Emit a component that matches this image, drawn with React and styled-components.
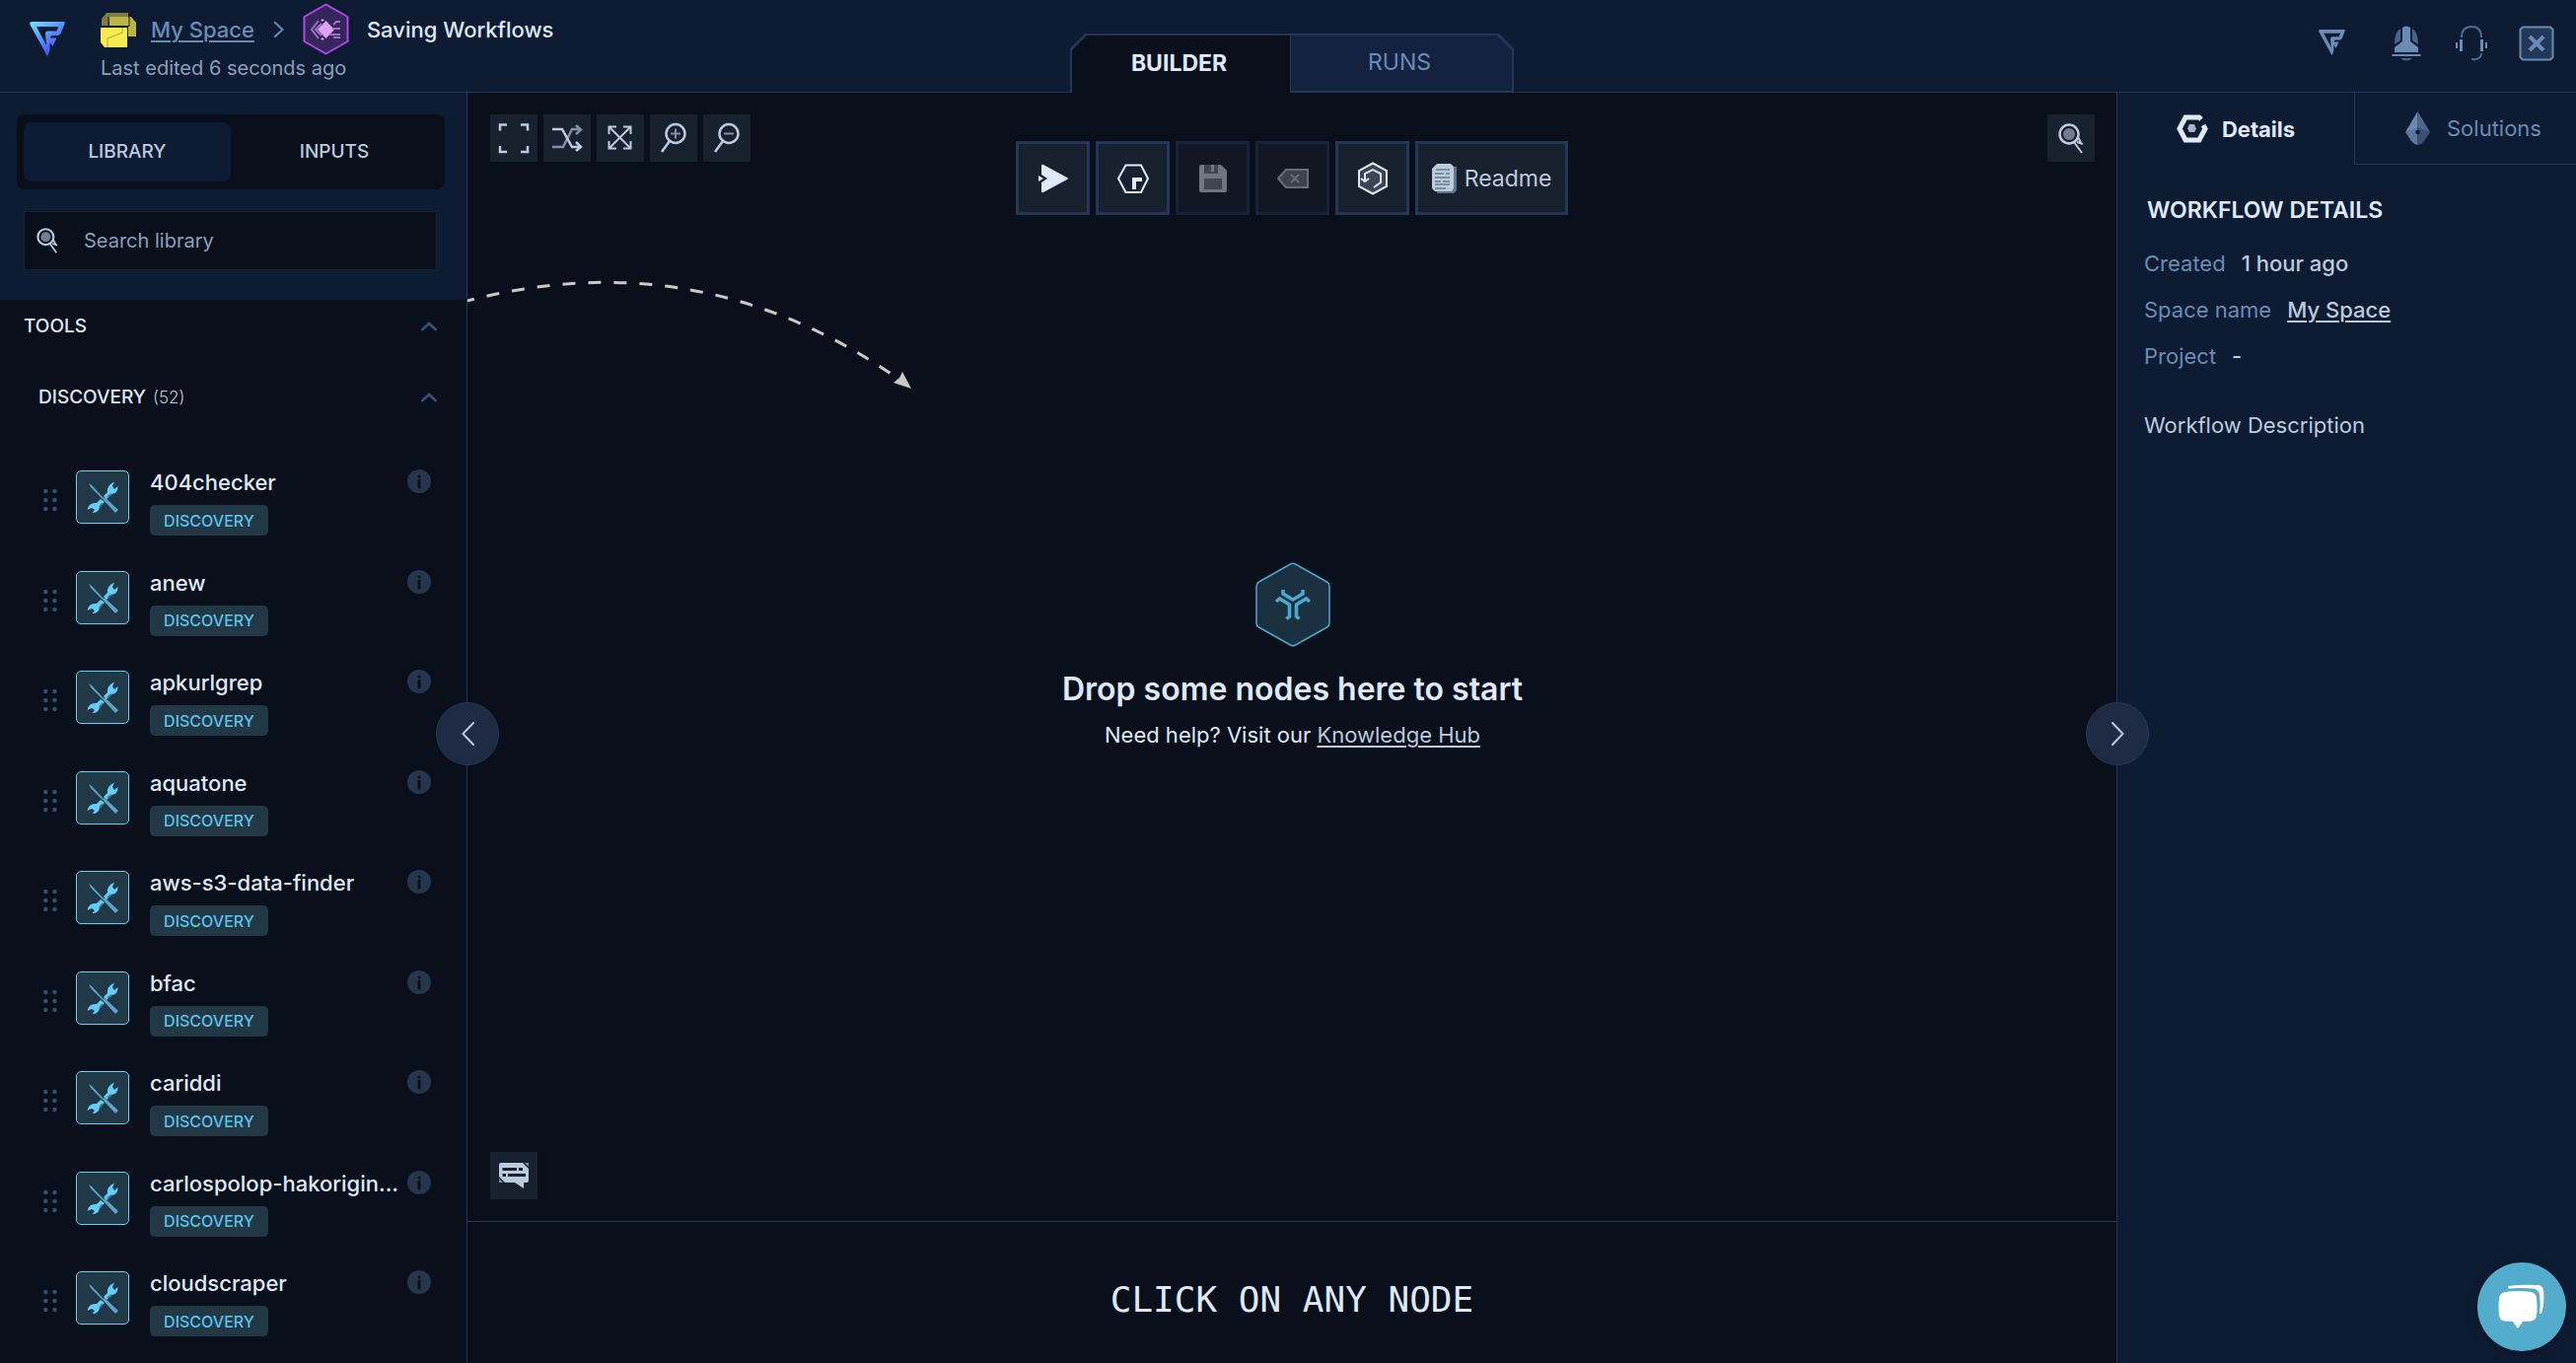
import React from "react";
import styled, { createGlobalStyle, css } from "styled-components";

const color = {
  ink: "#0a101b",
  navy: "#0e1c33",
  tab: "#132241",
  tile: "#18212e",
  line: "#243759",
  text: "#dfe9f9",
  soft: "#bccade",
  muted: "#6b8bb5",
  faint: "#8c9fbc",
  cyan: "#64cdf8",
};

const GlobalStyle = createGlobalStyle`
  *, *::before, *::after { box-sizing: border-box; }
  body {
    margin: 0;
    background: ${color.ink};
    color: ${color.text};
    font-family: Inter, "Liberation Sans", sans-serif;
    font-size: 22px;
    line-height: 26px;
  }
  h1, h2, h3, p, ul, dl, dd { margin: 0; padding: 0; }
  ul { list-style: none; }
  button { font: inherit; color: inherit; cursor: pointer; padding: 0; border: 0; background: none; }
  a { color: inherit; text-underline-offset: 3px; text-decoration-thickness: 2px; }
  svg { display: block; flex: none; }
`;

/* ---------- layout ---------- */

const Page = styled.div`
  height: 100vh;
  display: grid;
  grid-template-rows: 94px minmax(0, 1fr);
`;

const Header = styled.header`
  display: grid;
  grid-template-columns: 1fr auto 1fr;
  background: ${color.navy};
  border-bottom: 1px solid ${color.line};
`;

const Main = styled.main`
  position: relative;
  display: grid;
  grid-template-columns: 474px minmax(0, 1fr) 466px;
  min-height: 0;
`;

/* ---------- header ---------- */

const Brand = styled.div`
  display: flex;
  align-items: flex-start;
  gap: 36px;
  padding-left: 30px;
`;

const BrandLink = styled.a`
  margin-top: 22px;
`;

const TitleBlock = styled.div`
  display: flex;
  flex-direction: column;
  padding-top: 3px;
`;

const Crumbs = styled.nav`
  display: flex;
  align-items: center;
  height: 53px;
`;

const SpaceLink = styled.a`
  margin: 0 20px 0 15px;
  color: ${color.muted};
  font-weight: 500;
`;

const HexBadge = styled.span`
  margin: 0 18px 0 19px;
`;

const WorkflowTitle = styled.h1`
  font-size: 22px;
  font-weight: 500;
`;

const Edited = styled.p`
  color: ${color.faint};
  font-size: 20px;
`;

const ViewTabs = styled.nav`
  align-self: end;
  display: flex;
  height: 60px;
  margin: 0 0 -1px 8px;
`;

const cutLeft = "polygon(0 15px, 15px 0, 100% 0, 100% 100%, 0 100%)";
const cutRight = "polygon(0 0, calc(100% - 15px) 0, 100% 15px, 100% 100%, 0 100%)";

const ViewTab = styled.button`
  width: ${(p) => (p.$active ? 223 : 227)}px;
  padding: ${(p) => (p.$active ? "2px 0 0 2px" : "2px 2px 2px 1px")};
  background: ${color.line};
  clip-path: ${(p) => (p.$active ? cutLeft : cutRight)};

  span {
    display: grid;
    place-items: center;
    height: 100%;
    padding: ${(p) => (p.$active ? "0 4px 3px 0" : "0 4px 2px 0")};
    background: ${(p) => (p.$active ? color.ink : color.tab)};
    color: ${(p) => (p.$active ? color.text : color.muted)};
    clip-path: ${(p) => (p.$active ? cutLeft : cutRight)};
    font-size: 23px;
    font-weight: ${(p) => (p.$active ? 700 : 400)};
  }
`;

const HeaderActions = styled.div`
  justify-self: end;
  display: flex;
  align-items: center;
  gap: 30px;
  padding: 0 22px 6px 0;
`;

const IconButton = styled.button`
  min-width: ${(p) => (p.$wide ? 56 : 36)}px;
  display: grid;
  place-items: center;
`;

/* ---------- library sidebar ---------- */

const Sidebar = styled.aside`
  display: flex;
  flex-direction: column;
  min-height: 0;
  border-right: 1px solid ${color.line};
`;

const SidebarTop = styled.div`
  padding: 22px 22px 30px 17px;
  background: ${color.navy};
`;

const Switcher = styled.div`
  display: grid;
  grid-template-columns: 1fr 1fr;
  padding: 8px 7px;
  border-radius: 8px;
  background: ${color.ink};
`;

const SwitchButton = styled.button`
  height: 60px;
  border-radius: 8px;
  color: ${color.soft};
  font-size: 19px;
  font-weight: 500;
  ${(p) => p.$active && css`background: ${color.navy};`}
`;

const SearchBox = styled.label`
  display: flex;
  align-items: center;
  gap: 26px;
  height: 60px;
  margin: 22px 8px 0 7px;
  padding-left: 12px;
  border: 1px solid #18222f;
  background: ${color.ink};
`;

const SearchInput = styled.input`
  flex: 1;
  min-width: 0;
  height: 100%;
  padding: 0;
  border: 0;
  outline: 0;
  background: none;
  color: ${color.text};
  font: inherit;
  font-size: 20px;
  &::placeholder { color: ${color.faint}; opacity: 1; }
`;

const SectionToggle = styled.button`
  display: flex;
  align-items: center;
  gap: 7px;
  height: 52px;
  margin-top: ${(p) => (p.$nested ? 20 : 1)}px;
  padding: 0 30px 0 ${(p) => (p.$nested ? 39 : 24)}px;
  font-size: 19px;
  font-weight: 500;
  text-align: left;

  small {
    color: ${color.soft};
    font-size: 17px;
    font-weight: 300;
  }
  svg { margin-left: auto; }
`;

const ToolList = styled.ul`
  flex: 1;
  min-height: 0;
  display: flex;
  flex-direction: column;
  justify-content: space-between;
  gap: 20px;
  margin-top: 47px;
  padding-bottom: 27px;
  overflow: hidden;
`;

const ToolItem = styled.li`
  flex: none;
  display: grid;
  grid-template-columns: 14px 54px minmax(0, 1fr) 24px;
  align-items: start;
  padding: 0 36px 0 44px;
`;

const Grip = styled.span`
  padding-top: 19px;
`;

const ToolTile = styled.span`
  display: grid;
  place-items: center;
  width: 54px;
  height: 54px;
  margin: 1px 0 0 19px;
  border: 1px solid ${color.cyan};
  border-radius: 5px;
  background: #213846;
`;

const ToolText = styled.div`
  padding-left: 40px;
`;

const ToolName = styled.h3`
  font-size: 22px;
  font-weight: 500;
  line-height: 26px;
  white-space: nowrap;
`;

const Tag = styled.span`
  display: inline-grid;
  place-items: center;
  width: 120px;
  height: 31px;
  margin-top: 10px;
  border-radius: 5px;
  background: #223845;
  color: #5bc2ee;
  font-size: 16px;
  font-weight: 500;
  vertical-align: top;
`;

/* ---------- canvas ---------- */

const Center = styled.section`
  display: grid;
  grid-template-rows: minmax(0, 1fr) 143px;
  min-width: 0;
`;

const Canvas = styled.div`
  position: relative;
  display: flex;
  flex-direction: column;
  justify-content: space-between;
  padding: 22px 22px 22px 23px;
  border-bottom: 1px solid ${color.line};
`;

const ToolRow = styled.div`
  display: flex;
  gap: 6px;
`;

const SmallButton = styled.button`
  display: grid;
  place-items: center;
  width: 48px;
  height: 48px;
  margin-left: ${(p) => (p.$end ? "auto" : "0")};
  background: ${color.tile};
`;

const ActionBar = styled.div`
  position: absolute;
  top: 49px;
  left: 50%;
  transform: translateX(-50%);
  display: flex;
  gap: 6px;
`;

const ActionButton = styled.button`
  display: flex;
  align-items: center;
  justify-content: center;
  gap: 8px;
  width: ${(p) => (p.$wide ? 155 : 75)}px;
  height: 75px;
  border: 3px solid ${color.line};
  background: ${color.tile};
  color: ${color.soft};
  font-size: 23px;
  opacity: ${(p) => (p.disabled ? 0.5 : 1)};
`;

const HintArrow = styled.svg`
  position: absolute;
  top: 180px;
  left: 0;
`;

const EmptyState = styled.div`
  display: flex;
  flex-direction: column;
  align-items: center;
  padding-bottom: 4px;
  text-align: center;

  h2 {
    margin-top: 23px;
    font-size: 32px;
    font-weight: 600;
    line-height: 40px;
  }
  p { margin-top: 13px; }
  a { color: ${color.soft}; }
`;

const NodePanel = styled.div`
  display: grid;
  place-items: center;
  padding-top: 15px;
  font-family: "DejaVu Sans Mono", monospace;
  font-size: 36px;
  line-height: 42px;
`;

/* ---------- details ---------- */

const Details = styled.aside`
  border-left: 1px solid ${color.line};
  background: ${color.navy};
`;

const DetailTabs = styled.div`
  display: grid;
  grid-template-columns: 240px 1fr;
  height: 73px;
`;

const DetailTab = styled.button`
  display: flex;
  align-items: center;
  justify-content: center;
  gap: ${(p) => (p.$active ? 14 : 17)}px;
  color: ${(p) => (p.$active ? color.text : color.muted)};
  font-weight: ${(p) => (p.$active ? 700 : 400)};
  ${(p) =>
    !p.$active &&
    css`
      padding-left: 16px;
      border-left: 1px solid ${color.line};
      border-bottom: 1px solid ${color.line};
    `}
`;

const DetailBody = styled.div`
  padding: 33px 27px;

  h2 {
    padding-left: 3px;
    font-size: 23px;
    font-weight: 600;
  }
`;

const Facts = styled.dl`
  display: grid;
  gap: 21px;
  margin: 28px 0 44px;
`;

const Fact = styled.div`
  display: flex;
  gap: 16px;

  dt { color: ${color.muted}; }
  dd { color: ${color.soft}; font-weight: 500; }
`;

const Description = styled.p`
  color: ${color.soft};
`;

/* ---------- floating controls ---------- */

const PanelHandle = styled.button`
  position: absolute;
  top: 48%;
  ${(p) => (p.$side === "left" ? "left: 442px;" : "right: 433px;")}
  display: grid;
  place-items: center;
  width: 64px;
  height: 64px;
  border: 1px solid ${color.line};
  border-radius: 50%;
  background: #1e2b43;
  z-index: 2;
`;

const ChatButton = styled.button`
  position: absolute;
  right: 10px;
  bottom: 12px;
  display: grid;
  place-items: center;
  width: 90px;
  height: 90px;
  border-radius: 50%;
  background: #54accd;
  box-shadow: 0 2px 12px rgba(0, 0, 0, 0.3);
`;

/* ---------- icons ---------- */

const Logo = ({ size, gradient }) => (
  <svg width={size} height={size} viewBox="0 0 36 36" aria-hidden="true">
    <defs>
      <linearGradient id="brand" x1="0" y1="0" x2="0.7" y2="1">
        <stop offset="0" stopColor="#6fe6ff" />
        <stop offset="0.5" stopColor="#5791ff" />
        <stop offset="1" stopColor="#4a3df0" />
      </linearGradient>
    </defs>
    <path
      fill={gradient ? "url(#brand)" : color.muted}
      fillRule="evenodd"
      d="M2 0H34Q36.500 0 35.500 2.500L31.500 12Q30.800 14 28.500 14H22L21 16.500H27.500L23.500 25L20.500 21V29L18 35L0.500 3Q-0.500 0 2 0ZM7 5L17 24L16 12Q16 9.500 18.500 9.500H27.500L29.500 5Z"
    />
  </svg>
);

const FolderIcon = () => (
  <svg width="36" height="36" viewBox="0 0 36 36" aria-hidden="true">
    <path d="M6 1H28V5H9L8 14H1V7Z" fill="#807c3f" />
    <path d="M9 5H31L36 11V25H28V15H9Z" fill="#bbb544" />
    <path d="M8 5V14.500H29V5" fill="none" stroke={color.navy} strokeWidth="1" />
    <path d="M0 16H27V36H4L0 31Z" fill="#f6ec4c" />
    <path d="M22 16V21L7 27V36" fill="none" stroke="#b0a73b" strokeWidth="1" />
  </svg>
);

const PurpleHex = () => (
  <svg width="47" height="53" viewBox="0 0 47 53" aria-hidden="true">
    <path d="M23.500 1.500L45.500 14V39L23.500 51.500L1.500 39V14Z" fill="#35265c" stroke="#b347ea" strokeWidth="2" strokeLinejoin="round" />
    <path d="M23.500 18L32 27L23.500 36L15 27Z" fill="#dda3f8" />
    <g fill="none" stroke="#a06fc4" strokeWidth="2">
      <path d="M16 18L9 27L16 36M19 21L13 27L19 33" />
      <path d="M38 19H34L31 22M30 26H38M27 32H38M31 35H38" />
    </g>
    <path d="M20 16V19M18.500 17.500H21.500M20 35V38M18.500 36.500H21.500" stroke="#dda3f8" />
  </svg>
);

const Chevron = ({ dir, stroke, w = 10, h = 16, weight = 2 }) => (
  <svg width={w} height={h} viewBox={`0 0 ${w} ${h}`} aria-hidden="true">
    <path
      d={
        dir === "up"
          ? `M1.500 ${h - 2}L${w / 2} 2L${w - 1.5} ${h - 2}`
          : dir === "left"
          ? `M${w - 1} 1L1.500 ${h / 2}L${w - 1} ${h - 1}`
          : `M1 1L${w - 1.5} ${h / 2}L1 ${h - 1}`
      }
      fill="none"
      stroke={stroke}
      strokeWidth={weight}
      strokeLinecap="round"
    />
  </svg>
);

const HelmetIcon = () => (
  <svg width="30" height="36" viewBox="0 0 30 36" aria-hidden="true">
    <path d="M9 3Q3 7 3 19L9 15ZM21 3Q27 7 27 19L21 15Z" fill="#4c658a" />
    <path d="M11 2Q15 -1 19 2V16L27 22V27H3V22L11 16Z" fill={color.muted} />
    <path d="M0.500 30H29.500" stroke={color.muted} strokeWidth="2" />
    <path d="M9 33H21Q15 38 9 33Z" fill="#4c658a" />
  </svg>
);

const HeadsetIcon = () => (
  <svg width="32" height="36" viewBox="0 0 32 36" aria-hidden="true">
    <path d="M6 12Q6 1 16 1Q26 1 26 12" fill="none" stroke="#4f698f" strokeWidth="2" />
    <path d="M4 14H7V26H4ZM25 14H28V26H25Z" fill={color.muted} />
    <path d="M1 17V23M31 17V23" stroke={color.muted} strokeWidth="2" />
    <path d="M26 28Q26 34 18 34.500M16 34H19" fill="none" stroke="#4f698f" strokeWidth="2" />
  </svg>
);

const CloseIcon = () => (
  <svg width="36" height="36" viewBox="0 0 36 36" aria-hidden="true">
    <path d="M4 1.500H32L34.500 4V32L32 34.500H4L1.500 32V4Z" fill="#233756" stroke={color.muted} strokeWidth="2" />
    <path d="M11 11L25 25M25 11L11 25" stroke={color.muted} strokeWidth="4" />
  </svg>
);

const LoupeIcon = ({ w = 22, h = 26 }) => (
  <svg width={w} height={h} viewBox="0 0 26 31" aria-hidden="true">
    <circle cx="11" cy="11" r="9.500" fill="none" stroke={color.soft} strokeWidth="2.500" />
    <circle cx="11" cy="11" r="6" fill="#727e8f" />
    <path d="M16 19L24 30M20 14L23 20M19 19L25 21" stroke={color.soft} strokeWidth="2" />
  </svg>
);

const GripDots = () => (
  <svg width="14" height="24" viewBox="0 0 14 24" aria-hidden="true">
    {[3, 12, 21].map((y) => (
      <g key={y} fill="#3a4c67">
        <circle cx="2.300" cy={y} r="2.300" />
        <circle cx="11.500" cy={y} r="2.300" />
      </g>
    ))}
  </svg>
);

const ToolsIcon = () => (
  <svg width="32" height="32" viewBox="0 0 32 32" aria-hidden="true">
    <path d="M17 15L21 11Q20 4 28 0.500L26 5L28 8L31.500 5Q32 12 25 13L20 18Z" fill={color.cyan} />
    <path d="M14 18L10 22Q2 21 0.500 29L5 27L8 29L5.500 32Q12 32 13 26L18 21Z" fill={color.cyan} />
    <path d="M2 2L5 4L17 17L18 16L32 29L29 32L17 19L16 18L4 6Z" fill="#5aa5c9" />
    <path d="M21 16L25 13M13 26L16 22" stroke="#41788f" strokeWidth="2" />
  </svg>
);

const InfoIcon = () => (
  <svg width="24" height="24" viewBox="0 0 24 24" aria-hidden="true">
    <circle cx="12" cy="12" r="12" fill="#26364c" />
    <circle cx="12" cy="7" r="1.500" fill={color.ink} />
    <path d="M12 11V18" stroke={color.ink} strokeWidth="3" strokeLinecap="round" />
  </svg>
);

const Glyph = ({ children, size = 32 }) => (
  <svg
    width={size}
    height={size}
    viewBox="0 0 32 32"
    fill="none"
    stroke={color.soft}
    strokeWidth="2"
    aria-hidden="true"
  >
    {children}
  </svg>
);

const FrameIcon = () => (
  <Glyph>
    <path d="M2 8.500V2.500H9M23 2.500H30V8.500M30 24V30H23M9 30H2V24" strokeWidth="2.500" />
  </Glyph>
);

const ShuffleIcon = () => (
  <Glyph>
    <path d="M1 25H12L21 7H30M25 3L30 7.500L25 12" stroke="#8391a4" strokeWidth="2.500" />
    <path d="M1 7H11L21 25H30M25 20L30 25L25 29" strokeWidth="2.500" />
  </Glyph>
);

const ExpandIcon = () => (
  <Glyph>
    <path d="M5 5L26 26M26 5L5 26M4.500 12V4.500H12M19 4.500H26.500V12M26.500 19V26.500H19M12 26.500H4.500V19" />
  </Glyph>
);

const ZoomIcon = ({ plus }) => (
  <Glyph>
    <circle cx="18" cy="11.500" r="9.500" strokeWidth="2.500" />
    <path d="M12 19L4 30" strokeWidth="2.500" />
    <path d={plus ? "M13 11.500H23M18 6.500V16.500" : "M13 11.500H23"} stroke="#8391a4" />
  </Glyph>
);

const RunIcon = () => (
  <Glyph>
    <path d="M4 3Q4 1 6 2L30 15Q32 16 30 17L6 30Q4 31 4 29V20L10 16L4 12Z" fill={color.text} stroke="none" />
    <path d="M1 13L6 16L1 19Z" fill={color.text} stroke="none" />
  </Glyph>
);

const NodeHexIcon = () => (
  <Glyph>
    <path d="M8.500 2.500H24L31 16L24 30H8.500L1 16Z" stroke={color.text} />
    <path d="M17 27V17H25" stroke={color.text} strokeWidth="4" />
  </Glyph>
);

const SaveIcon = () => (
  <Glyph>
    <path d="M4 2H24L30 8V28Q30 30 28 30H4Q2 30 2 28V4Q2 2 4 2Z" fill="#d5dbe4" stroke="none" />
    <path d="M7 2H21V11H7ZM7 16H25V27H7Z" fill="#747d8a" stroke="none" />
    <path d="M15.500 2V9" stroke="#d5dbe4" strokeWidth="3" />
  </Glyph>
);

const ClearIcon = () => (
  <Glyph>
    <path d="M9 7H31V25H9L1 16Z" fill="#6e7785" stroke="#c2c9d3" />
    <path d="M14 12L22 20M22 12L14 20" stroke="#c2c9d3" />
  </Glyph>
);

const HistoryIcon = () => (
  <svg width="32" height="34" viewBox="0 0 32 34" fill="none" stroke={color.text} strokeWidth="2" aria-hidden="true">
    <path d="M16 1.500L30 9V25L16 32.500L2 25V9Z" fill="#3b4554" />
    <path d="M8 20V12L16 8L24 12V21L17 26M4 17L8 20L12 17" />
  </svg>
);

const ReadmeIcon = () => (
  <svg width="25" height="30" viewBox="0 0 25 30" aria-hidden="true">
    <path d="M6 3H25V27L22 30H5Z" fill="#64728a" />
    <path d="M5 0H19L22 3V25L20 28H3L0 25V5Z" fill={color.soft} />
    <path d="M4 6H18M3 10H12M14 10H18M3 14H18M3 18H9M11 18H18M3 21H18M3 25H14" stroke="#445064" strokeWidth="1" />
  </svg>
);

const HubIcon = () => (
  <svg width="76" height="86" viewBox="0 0 76 86" aria-hidden="true">
    <path d="M35.500 2Q38 0.500 40.500 2L72.500 20Q75 21.500 75 24V62Q75 64.500 72.500 66L40.500 84Q38 85.500 35.500 84L3.500 66Q1 64.500 1 62V24Q1 21.500 3.500 20Z" fill="#1b3040" stroke="#4ba9cb" strokeWidth="1.500" />
    <g fill="none" stroke="#4ba9cb" strokeWidth="3.500">
      <path d="M28 28V32L38 38L48 32V28" />
      <path d="M21 40L24.500 37L34.500 43V55L31.500 57.500M55 40L51.500 37L41.500 43V55L44.500 57.500" />
    </g>
  </svg>
);

const NoteIcon = () => (
  <svg width="30" height="27" viewBox="0 0 30 27" aria-hidden="true">
    <path d="M0 2Q0 0 2 0H24L30 6V18Q30 20 28 20H25V26L16 20H6L0 14Z" fill={color.soft} />
    <path d="M26 0H30V4ZM0 16L4 20H0Z" fill="#8391a4" />
    <path d="M3.500 6.500H18M20 6.500H24M3.500 12.500H7M9 12.500H27" stroke={color.tile} strokeWidth="3" />
  </svg>
);

const DetailsIcon = () => (
  <svg width="32" height="29" viewBox="0 0 32 29" aria-hidden="true">
    <path d="M25 5L23 3H9L3 14.500L9 26H23L29 14.500L27 11" fill="none" stroke={color.text} strokeWidth="5" />
    <path d="M13 10H18L20 14.500L18 18H13L11 14.500Z" fill="#a9b5c7" />
  </svg>
);

const SolutionsIcon = () => (
  <svg width="25" height="34" viewBox="0 0 25 34" aria-hidden="true">
    <path d="M12.500 0L0 21L12.500 17Z" fill={color.muted} />
    <path d="M12.500 0L25 21L12.500 17Z" fill="#4d688f" />
    <path d="M0 21L12.500 16V34Q8 33 6 30Z" fill="#5a78a1" />
    <path d="M25 21L12.500 16V34Q17 33 19 30Z" fill="#3d5070" />
    <circle cx="12.500" cy="21" r="2.300" fill={color.navy} />
  </svg>
);

const ChatIcon = () => (
  <svg width="48" height="46" viewBox="0 0 48 46" aria-hidden="true">
    <path d="M10 2Q25 0 40 1Q45 1 46 6Q47.500 19 44 30H42Q43.500 20 42 11Q41 5 35 4.500Q22 3.500 10 4.500Z" fill="#fff" />
    <path d="M7 8Q20 6 33 8Q38 8.500 39 14Q40 23 39 32Q38 37 33 37.500L25 38L21 44Q20 45.500 19 44L15 38L7 37.500Q2 37 1 32Q0 23 1 14Q2 9 7 8Z" fill="#fff" />
  </svg>
);

/* ---------- content ---------- */

const tools = [
  "404checker",
  "anew",
  "apkurlgrep",
  "aquatone",
  "aws-s3-data-finder",
  "bfac",
  "cariddi",
  "carlospolop-hakorigin...",
  "cloudscraper",
];

const Tool = ({ name }) => (
  <ToolItem>
    <Grip><GripDots /></Grip>
    <ToolTile><ToolsIcon /></ToolTile>
    <ToolText>
      <ToolName>{name}</ToolName>
      <Tag>DISCOVERY</Tag>
    </ToolText>
    <button type="button" aria-label={`About ${name}`}><InfoIcon /></button>
  </ToolItem>
);

export default function App() {
  return (
    <Page>
      <GlobalStyle />
      <Header>
        <Brand>
          <BrandLink href="#home" aria-label="Home"><Logo size={36} gradient /></BrandLink>
          <TitleBlock>
            <Crumbs>
              <FolderIcon />
              <SpaceLink href="#space">My Space</SpaceLink>
              <Chevron dir="right" stroke={color.muted} />
              <HexBadge><PurpleHex /></HexBadge>
              <WorkflowTitle>Saving Workflows</WorkflowTitle>
            </Crumbs>
            <Edited>Last edited 6 seconds ago</Edited>
          </TitleBlock>
        </Brand>
        <ViewTabs>
          <ViewTab type="button" $active><span>BUILDER</span></ViewTab>
          <ViewTab type="button"><span>RUNS</span></ViewTab>
        </ViewTabs>
        <HeaderActions>
          <IconButton type="button" $wide aria-label="Plan"><Logo size={27} /></IconButton>
          <IconButton type="button" aria-label="Notifications"><HelmetIcon /></IconButton>
          <IconButton type="button" aria-label="Support"><HeadsetIcon /></IconButton>
          <IconButton type="button" aria-label="Close"><CloseIcon /></IconButton>
        </HeaderActions>
      </Header>

      <Main>
        <Sidebar>
          <SidebarTop>
            <Switcher>
              <SwitchButton type="button" $active>LIBRARY</SwitchButton>
              <SwitchButton type="button">INPUTS</SwitchButton>
            </Switcher>
            <SearchBox>
              <LoupeIcon />
              <SearchInput type="text" placeholder="Search library" aria-label="Search library" />
            </SearchBox>
          </SidebarTop>
          <SectionToggle type="button">
            TOOLS
            <Chevron dir="up" stroke="#3a4c67" w={16} h={10} weight={3} />
          </SectionToggle>
          <SectionToggle type="button" $nested>
            DISCOVERY <small>(52)</small>
            <Chevron dir="up" stroke="#3a4c67" w={16} h={10} weight={3} />
          </SectionToggle>
          <ToolList>
            {tools.map((name) => <Tool key={name} name={name} />)}
          </ToolList>
        </Sidebar>

        <Center>
          <Canvas>
            <HintArrow width="460" height="130" viewBox="0 0 460 130" aria-hidden="true">
              <path
                d="M0 31Q238 -31 441 113"
                fill="none"
                stroke="#c9c9c6"
                strokeWidth="3"
                strokeDasharray="13 13"
                strokeDashoffset="6"
              />
              <path d="M450 120L441 103L438 109L432 114Z" fill="#c9c9c6" />
            </HintArrow>
            <ToolRow>
              <SmallButton type="button" aria-label="Full screen"><FrameIcon /></SmallButton>
              <SmallButton type="button" aria-label="Rearrange"><ShuffleIcon /></SmallButton>
              <SmallButton type="button" aria-label="Fit to view"><ExpandIcon /></SmallButton>
              <SmallButton type="button" aria-label="Zoom in"><ZoomIcon plus /></SmallButton>
              <SmallButton type="button" aria-label="Zoom out"><ZoomIcon /></SmallButton>
              <SmallButton type="button" aria-label="Search nodes" $end><LoupeIcon w={26} h={31} /></SmallButton>
            </ToolRow>
            <ActionBar>
              <ActionButton type="button" aria-label="Run"><RunIcon /></ActionButton>
              <ActionButton type="button" aria-label="Node view"><NodeHexIcon /></ActionButton>
              <ActionButton type="button" aria-label="Save" disabled><SaveIcon /></ActionButton>
              <ActionButton type="button" aria-label="Clear" disabled><ClearIcon /></ActionButton>
              <ActionButton type="button" aria-label="History"><HistoryIcon /></ActionButton>
              <ActionButton type="button" $wide><ReadmeIcon />Readme</ActionButton>
            </ActionBar>
            <EmptyState>
              <HubIcon />
              <h2>Drop some nodes here to start</h2>
              <p>Need help? Visit our <a href="#hub">Knowledge Hub</a></p>
            </EmptyState>
            <ToolRow>
              <SmallButton type="button" aria-label="Add note"><NoteIcon /></SmallButton>
            </ToolRow>
          </Canvas>
          <NodePanel>CLICK ON ANY NODE</NodePanel>
        </Center>

        <Details>
          <DetailTabs>
            <DetailTab type="button" $active><DetailsIcon />Details</DetailTab>
            <DetailTab type="button"><SolutionsIcon />Solutions</DetailTab>
          </DetailTabs>
          <DetailBody>
            <h2>WORKFLOW DETAILS</h2>
            <Facts>
              <Fact><dt>Created</dt><dd>1 hour ago</dd></Fact>
              <Fact><dt>Space name</dt><dd><a href="#space">My Space</a></dd></Fact>
              <Fact><dt>Project</dt><dd>-</dd></Fact>
            </Facts>
            <Description>Workflow Description</Description>
          </DetailBody>
        </Details>

        <PanelHandle type="button" $side="left" aria-label="Collapse library">
          <Chevron dir="left" stroke={color.soft} w={13} h={24} />
        </PanelHandle>
        <PanelHandle type="button" $side="right" aria-label="Collapse details">
          <Chevron dir="right" stroke={color.soft} w={13} h={24} />
        </PanelHandle>
        <ChatButton type="button" aria-label="Open chat"><ChatIcon /></ChatButton>
      </Main>
    </Page>
  );
}
